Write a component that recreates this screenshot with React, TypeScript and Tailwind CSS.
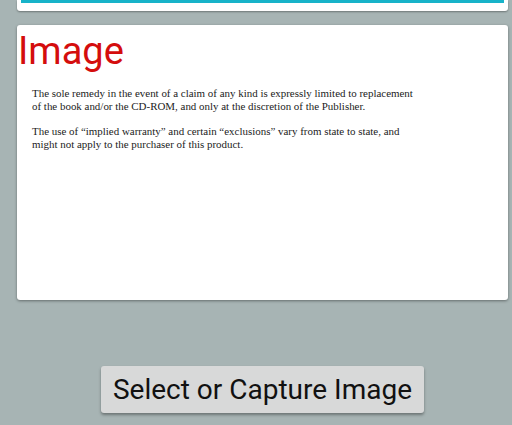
export default function App() {
  return (
    <div className="h-[425px] w-[512px] overflow-hidden bg-[#a7b4b4] pl-[17px] pr-[4px] font-['Roboto',sans-serif]">
      {/* card scrolled mostly out of view */}
      <div className="h-[11px] rounded-b-[3px] bg-white px-[4px] shadow-[0_1px_2px_rgba(0,0,0,0.35)]">
        <div className="h-[3px] bg-[#17b3c9]" />
      </div>

      <div className="mt-[14px] h-[275px] rounded-[3px] bg-white shadow-[0_1px_3px_rgba(0,0,0,0.4)]">
        <h1 className="pl-[1px] pt-[3px] text-[38px] leading-[46px] text-[#d40d0d]">
          Image
        </h1>
        <div className="mt-[13px] pl-[15px] font-['Liberation_Serif',serif] text-[10.95px] leading-[12.5px] text-[#222]">
          <p>
            The sole remedy in the event of a claim of any kind is expressly limited to replacement
            <br />
            of the book and/or the CD-ROM, and only at the discretion of the Publisher.
          </p>
          <p className="mt-[13px]">
            The use of “implied warranty” and certain “exclusions” vary from state to state, and
            <br />
            might not apply to the purchaser of this product.
          </p>
        </div>
      </div>

      <div className="flex justify-center pt-[66px]">
        <button
          type="button"
          className="h-[47px] rounded-[3px] bg-[#d8d9d9] px-[12px] text-[28px] text-[#111] shadow-[0_2px_3px_rgba(0,0,0,0.35)]"
        >
          Select or Capture Image
        </button>
      </div>
    </div>
  );
}
